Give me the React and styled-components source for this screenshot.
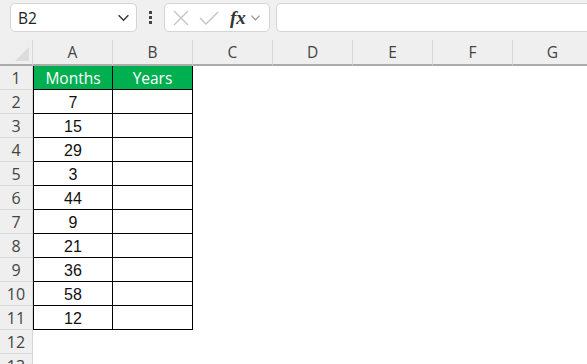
import React from 'react';
import styled, { createGlobalStyle } from 'styled-components';

const Global = createGlobalStyle`
  html, body { margin: 0; padding: 0; background: #fff; }
  body { font-family: "Liberation Sans", Arial, sans-serif; overflow: hidden; }
`;

const Page = styled.div`
  width: 587px;
  height: 364px;
  overflow: hidden;
  background: #fff;
`;

const Toolbar = styled.div`
  height: 40px;
  background: #f0f0f0;
  display: flex;
  align-items: flex-start;
  padding: 3px 0 0 10px;
  box-sizing: border-box;
`;

const Box = styled.div`
  height: 29px;
  box-sizing: border-box;
  background: #fff;
  border: 1px solid #d4d4d4;
  border-radius: 5px;
  display: flex;
  align-items: center;
`;

const NameBox = styled(Box)`
  width: 127px;
  padding: 0 6px 0 7px;
  justify-content: space-between;
  font-family: "Open Sans", "Liberation Sans", sans-serif;
  font-size: 15.5px;
  color: #222;
`;

const Dots = styled.div`
  width: 27px;
  display: flex;
  flex-direction: column;
  align-items: center;
  gap: 2px;
  padding-top: 8px;
  span {
    width: 3px;
    height: 3px;
    background: #444;
  }
`;

const FxBox = styled(Box)`
  width: 106px;
  padding-left: 6px;
`;

const FxLabel = styled.span`
  margin-left: 9px;
  font-family: "Liberation Serif", serif;
  font-style: italic;
  font-weight: bold;
  font-size: 19px;
  color: #333;
`;

const Formula = styled(Box)`
  flex: 1;
  margin-left: 6px;
  border-right: none;
  border-radius: 5px 0 0 5px;
`;

const Grid = styled.div`
  display: grid;
  grid-template-columns: 33px repeat(7, 80px);
  grid-template-rows: 26px;
  grid-auto-rows: 24px;
`;

const Corner = styled.div`
  position: relative;
  background: #efefef;
  border-right: 1px solid #d6d6d6;
  border-bottom: 2px solid #ababab;
  box-sizing: border-box;
  &::after {
    content: '';
    position: absolute;
    right: 3px;
    bottom: 3px;
    border-style: solid;
    border-width: 0 0 14px 14px;
    border-color: transparent transparent #dcdcdc transparent;
  }
`;

const ColHead = styled.div`
  background: #efefef;
  border-right: 1px solid #d6d6d6;
  border-bottom: 2px solid #ababab;
  box-sizing: border-box;
  display: flex;
  align-items: center;
  justify-content: center;
  font-family: "Open Sans", "Liberation Sans", sans-serif;
  font-size: 15.5px;
  color: #444;
`;

const RowHead = styled.div`
  background: #efefef;
  border-right: 1px solid #d6d6d6;
  border-bottom: 1px solid #d9d9d9;
  box-sizing: border-box;
  display: flex;
  align-items: center;
  justify-content: center;
  padding-top: 1px;
  font-family: "Open Sans", "Liberation Sans", sans-serif;
  font-size: 16px;
  color: #444;
`;

const Cell = styled.div`
  box-sizing: border-box;
  display: flex;
  align-items: center;
  justify-content: center;
  padding-top: 2px;
  font-size: 16px;
  color: #111;
  background: ${p => (p.$head ? '#00b050' : '#fff')};
  ${p => p.$head && 'color: #fff; font-family: "Open Sans", "Liberation Sans", sans-serif; font-size: 15.5px; padding-top: 0;'}
  ${p => p.$border && `
    border-bottom: 1px solid #000;
    border-right: 1px solid #000;
  `}
  ${p => p.$left && 'border-left: 1px solid #000;'}
`;

const Chevron = ({ size = 12, color = '#444' }) => (
  <svg width={size} height={size} viewBox="0 0 12 12">
    <path d="M1.5 4 L6 8.5 L10.5 4" fill="none" stroke={color} strokeWidth="1.3" />
  </svg>
);

const months = [7, 15, 29, 3, 44, 9, 21, 36, 58, 12];
const cols = ['A', 'B', 'C', 'D', 'E', 'F', 'G'];

export default function App() {
  const rows = [];
  for (let r = 1; r <= 13; r++) {
    rows.push(<RowHead key={`h${r}`}>{r}</RowHead>);
    cols.forEach((c, i) => {
      const inTable = r <= 11 && i < 2;
      let text = '';
      if (r === 1 && i === 0) text = 'Months';
      if (r === 1 && i === 1) text = 'Years';
      if (r > 1 && r <= 11 && i === 0) text = months[r - 2];
      rows.push(
        <Cell key={`${c}${r}`} $head={r === 1 && inTable} $border={inTable} $left={inTable && i === 0}>
          {text}
        </Cell>
      );
    });
  }
  return (
    <Page>
      <Global />
      <Toolbar>
        <NameBox>
          <span>B2</span>
          <Chevron size={13} color="#333" />
        </NameBox>
        <Dots><span /><span /><span /></Dots>
        <FxBox>
          <svg width="20" height="20" viewBox="0 0 20 20">
            <path d="M3 3 L17 17 M17 3 L3 17" stroke="#c4c4c4" strokeWidth="1.4" fill="none" />
          </svg>
          <svg width="24" height="20" viewBox="0 0 24 20" style={{ marginLeft: 6 }}>
            <path d="M3 10 L9 16 L21 4" stroke="#c4c4c4" strokeWidth="1.4" fill="none" />
          </svg>
          <FxLabel>fx</FxLabel>
          <span style={{ marginLeft: 4, display: 'flex' }}><Chevron size={11} color="#999" /></span>
        </FxBox>
        <Formula />
      </Toolbar>
      <Grid>
        <Corner />
        {cols.map(c => <ColHead key={c}>{c}</ColHead>)}
        {rows}
      </Grid>
    </Page>
  );
}
